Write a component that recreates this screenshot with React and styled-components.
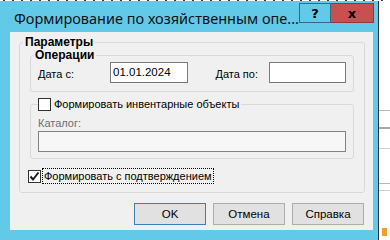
import React from "react";
import styled, { createGlobalStyle } from "styled-components";

const GlobalStyle = createGlobalStyle`
    html, body {
        margin: 0;
        padding: 0;
    }
    body {
        width: 390px;
        height: 240px;
        overflow: hidden;
        background: #ffffff;
        font-family: "Liberation Sans", Arial, sans-serif;
        font-size: 11px;
        color: #000000;
    }
`

const Page = styled.div`
    display: flex;
    flex-direction: column;
    width: 390px;
    height: 240px;
`

const TopStrip = styled.div`
    height: 1px;
    flex: none;
    background: repeating-linear-gradient(90deg, #ffffff 0 3px, #3a3a3a 3px 5px, #ffffff 5px 9px);
`

const Desktop = styled.div`
    display: flex;
    flex: 1;
    min-height: 0;
`

const Window = styled.div`
    width: 378px;
    flex: none;
    display: flex;
    flex-direction: column;
    background: #63c9e9;
    border-right: 1px solid #2c3338;
`

const TitleBar = styled.div`
    display: flex;
    align-items: flex-start;
    height: 31px;
    flex: none;
    padding-right: 4px;
`

const Title = styled.div`
    flex: 1;
    padding: 7px 0 0 14px;
    font-family: "Noto Sans", "Open Sans", sans-serif;
    font-size: 14.5px;
    line-height: 20px;
    color: #111111;
    white-space: nowrap;
`

const CaptionButton = styled.div`
    display: flex;
    align-items: center;
    justify-content: center;
    height: 20px;
    margin-top: 2px;
    box-sizing: border-box;
    width: ${props => props.width}px;
    background: ${props => props.danger ? "#c75050" : "#63c9e9"};
    border: 1px solid ${props => props.danger ? "#8e3a3a" : "#2f6b84"};
    border-left-width: ${props => props.danger ? 0 : 1}px;
    font-family: "DejaVu Sans", sans-serif;
    font-weight: bold;
    font-size: 13px;
    color: #000000;
`

const Client = styled.div`
    flex: none;
    height: 198px;
    margin: 0 5px 0 10px;
    box-sizing: border-box;
    background: #f0f0f0;
    display: flex;
    flex-direction: column;
    padding: 4px 8px 0 9px;
`

const Group = styled.fieldset`
    margin: ${props => props.top || 0}px 0 0 0;
    padding: 0 ${props => props.padRight}px ${props => props.padBottom}px ${props => props.padLeft}px;
    border: 1px solid #d6dadd;
    border-radius: 3px;
    min-width: 0;
    display: flex;
    flex-direction: column;
`

const Legend = styled.legend`
    margin-left: ${props => props.shift || 0}px;
    padding: 0 2px;
    font-weight: bold;
    font-size: 12px;
    line-height: 12px;
    display: flex;
    align-items: center;
`

const CheckLegend = styled.legend`
    padding: 0 2px 0 0;
    display: flex;
    align-items: center;
    gap: 3px;
    line-height: 14px;
`

const Row = styled.div`
    display: flex;
    align-items: center;
    height: 21px;
    margin: 1px 0 8px 0;
`

const Label = styled.span`
    width: ${props => props.width ? props.width + "px" : "auto"};
    flex: none;
    margin-right: ${props => props.gap || 0}px;
    padding-top: 3px;
`

const Spacer = styled.div`
    flex: 1;
`

const Input = styled.div`
    box-sizing: border-box;
    height: ${props => props.height || 21}px;
    width: ${props => props.width ? props.width + "px" : "auto"};
    flex: none;
    border: 1px solid ${props => props.disabled ? "#838383" : "#7a7a7a"};
    background: ${props => props.disabled ? "#f7f7f7" : "#ffffff"};
    padding: 2px 0 0 2px;
    font-size: 11.5px;
    line-height: 15px;
`

const CatalogLabel = styled.div`
    margin: 5px 0 1px 0;
    line-height: 14px;
    color: #6d6d6d;
`

const Box = styled.span`
    width: 13px;
    height: 13px;
    box-sizing: border-box;
    flex: none;
    border: 1px solid #333333;
    background: #ffffff;
    display: flex;
    align-items: center;
    justify-content: center;
`

const ConfirmRow = styled.div`
    display: flex;
    align-items: center;
    gap: 2px;
    margin: 10px 0 9px -2px;
`

const FocusLabel = styled.span`
    outline: 1px dotted #000000;
    outline-offset: 0;
    padding: 0 1px;
    line-height: 14px;
`

const ButtonBar = styled.div`
    display: flex;
    justify-content: flex-end;
    gap: 7px;
    margin-top: 10px;
    padding-right: 1px;
`

const Button = styled.div`
    width: 72px;
    height: 22px;
    box-sizing: border-box;
    display: flex;
    align-items: center;
    justify-content: center;
    background: #e1e1e1;
    border: 1px solid ${props => props.primary ? "#3c7fb1" : "#adadad"};
    font-size: 11.5px;
`

const Backdrop = styled.div`
    flex: 1;
    display: flex;
    flex-direction: column;
    padding-top: 109px;
`

const Rule = styled.div`
    height: ${props => props.h || 1}px;
    margin-top: ${props => props.top}px;
    margin-left: ${props => props.left || 0}px;
    width: ${props => props.w || 11}px;
    background: ${props => props.color || "#b9b9b9"};
`

function CheckBox({ checked }) {
    return (
        <Box>
            {checked &&
                <svg width="11" height="11" viewBox="0 0 11 11">
                    <path d="M1.5 5.5 L4 8.5 L9.5 1.5" stroke="#1b1b1b" strokeWidth="2" fill="none" />
                </svg>
            }
        </Box>
    );
}

export default function App() {
    return (
        <Page>
            <GlobalStyle />
            <TopStrip />
            <Desktop>
                <Window>
                    <TitleBar>
                        <Title>Формирование по хозяйственным опе...</Title>
                        <CaptionButton width={32}>?</CaptionButton>
                        <CaptionButton width={43} danger>x</CaptionButton>
                    </TitleBar>
                    <Client>
                        <Group padLeft={10} padRight={10} padBottom={0}>
                            <Legend shift={-7}>Параметры</Legend>
                            <Group top={1} padLeft={7} padRight={7} padBottom={0}>
                                <Legend shift={-5}>Операции</Legend>
                                <Row>
                                    <Label width={72}>Дата с:</Label>
                                    <Input width={78}>01.01.2024</Input>
                                    <Spacer />
                                    <Label gap={11}>Дата по:</Label>
                                    <Input width={77} />
                                </Row>
                            </Group>
                            <Group top={5} padLeft={7} padRight={7} padBottom={6}>
                                <CheckLegend>
                                    <CheckBox />
                                    Формировать инвентарные объекты
                                </CheckLegend>
                                <CatalogLabel>Каталог:</CatalogLabel>
                                <Input height={21} disabled />
                            </Group>
                            <ConfirmRow>
                                <CheckBox checked />
                                <FocusLabel>Формировать с подтверждением</FocusLabel>
                            </ConfirmRow>
                        </Group>
                        <ButtonBar>
                            <Button primary>OK</Button>
                            <Button>Отмена</Button>
                            <Button>Справка</Button>
                        </ButtonBar>
                    </Client>
                </Window>
                <Backdrop>
                    <Rule top={0} />
                    <Rule top={16} h={2} color="#a9a9a9" />
                    <Rule top={19} color="#d0d0d0" />
                    <Rule top={34} />
                    <Rule top={6} color="#d0d0d0" />
                    <Rule top={37} left={3} w={5} h={8} color="#f0a030" />
                </Backdrop>
            </Desktop>
        </Page>
    );
}
